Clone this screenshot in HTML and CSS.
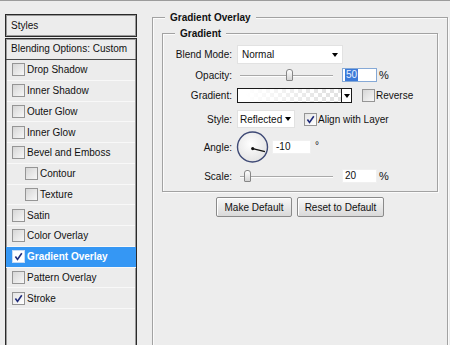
FILE: index.html
```html
<!DOCTYPE html>
<html lang="en">
<head>
    <meta charset="UTF-8">
    <title>Layer Style - Gradient Overlay</title>
    <link rel="stylesheet" href="styles.css">
</head>
<body>

<div class="dialog">
    <!-- style list on the left -->
    <div class="sidebar">
        <div class="styles-head">Styles</div>
        <div class="style-list">
            <div class="blend-row">Blending Options: Custom</div>
            <div class="item"><span class="check"></span>Drop Shadow</div>
            <div class="item"><span class="check"></span>Inner Shadow</div>
            <div class="item"><span class="check"></span>Outer Glow</div>
            <div class="item"><span class="check"></span>Inner Glow</div>
            <div class="item"><span class="check"></span>Bevel and Emboss</div>
            <div class="item sub"><span class="check"></span>Contour</div>
            <div class="item sub"><span class="check"></span>Texture</div>
            <div class="item"><span class="check"></span>Satin</div>
            <div class="item"><span class="check"></span>Color Overlay</div>
            <div class="item active"><span class="check on"><svg width="11" height="11" viewBox="0 0 11 11"><path d="M2.4 5.6 L4.5 8.4 L8.8 2.2" fill="none" stroke="#1f2b7a" stroke-width="1.6"/></svg></span>Gradient Overlay</div>
            <div class="item"><span class="check"></span>Pattern Overlay</div>
            <div class="item"><span class="check on"><svg width="11" height="11" viewBox="0 0 11 11"><path d="M2.4 5.6 L4.5 8.4 L8.8 2.2" fill="none" stroke="#1f2b7a" stroke-width="1.6"/></svg></span>Stroke</div>
        </div>
    </div>

    <!-- options on the right -->
    <div class="options">
        <div class="group outer">
            <div class="group-title">Gradient Overlay</div>
            <div class="group inner">
                <div class="group-title">Gradient</div>
                <div class="rows">
                    <div class="row r1">
                        <label class="lbl">Blend Mode:</label>
                        <div class="select blend">Normal<span class="arrow"></span></div>
                    </div>
                    <div class="row r2">
                        <label class="lbl">Opacity:</label>
                        <div class="slider"><span class="thumb" style="left: 46px"></span></div>
                        <div class="num focus"><span class="sel">50</span></div>
                        <span class="unit">%</span>
                    </div>
                    <div class="row r3">
                        <label class="lbl">Gradient:</label>
                        <div class="gradient-pick">
                            <div class="preview"></div>
                            <div class="drop"><span class="arrow"></span></div>
                        </div>
                        <span class="check reverse"></span><span class="cb-text">Reverse</span>
                    </div>
                    <div class="row r4">
                        <label class="lbl">Style:</label>
                        <div class="select style">Reflected<span class="arrow"></span></div>
                        <span class="check align on"><svg width="11" height="11" viewBox="0 0 11 11"><path d="M2.4 5.6 L4.5 8.4 L8.8 2.2" fill="none" stroke="#1f2b7a" stroke-width="1.6"/></svg></span><span class="cb-text">Align with Layer</span>
                    </div>
                    <div class="row r5">
                        <label class="lbl">Angle:</label>
                        <svg class="dial" width="35" height="32" viewBox="0 0 35 32">
                            <defs>
                                <radialGradient id="dialFill" cx="0.45" cy="0.4" r="0.6">
                                    <stop offset="0" stop-color="#ffffff"/>
                                    <stop offset="1" stop-color="#e4e4e4"/>
                                </radialGradient>
                            </defs>
                            <circle cx="17.5" cy="16" r="15" fill="url(#dialFill)" stroke="#3f4a76" stroke-width="1.4"/>
                            <line x1="17.7" y1="17.7" x2="30" y2="20.6" stroke="#111" stroke-width="1.3"/>
                            <circle cx="17.7" cy="17.6" r="1.6" fill="#111"/>
                        </svg>
                        <div class="num angle">-10</div>
                        <span class="deg">°</span>
                    </div>
                    <div class="row r6">
                        <label class="lbl">Scale:</label>
                        <div class="slider"><span class="thumb" style="left: 4px"></span></div>
                        <div class="num">20</div>
                        <span class="unit">%</span>
                    </div>
                </div>
            </div>
            <div class="buttons">
                <button class="btn make">Make Default</button>
                <button class="btn reset">Reset to Default</button>
            </div>
        </div>
    </div>
</div>

</body>
</html>
```

FILE: styles.css
```css
html, body {
    margin: 0;
    height: 345px;
    overflow: hidden;
}
body {
    font-family: "Liberation Sans", Arial, sans-serif;
    font-size: 10px;
    color: #111;
    background-color: #ededed;
    border-top: 1px solid #9c9c9c;
    box-sizing: border-box;
}
.dialog {
    display: flex;
    height: 100%;
    padding-left: 5px;
}

/* ---- left list ---- */
.sidebar {
    width: 132px;
    padding-top: 13px;
    display: flex;
    flex-direction: column;
}
.styles-head {
    height: 21px;
    line-height: 21px;
    padding-left: 5px;
    border: 1px solid #2a2a2a;
    box-shadow: inset 0 0 0 1px #9a9a9a;
    background-color: #ececec;
}
.style-list {
    flex: 1;
    margin-top: 1px;
    border: 1px solid #2a2a2a;
    border-bottom: none;
    box-shadow: inset 1px 0 0 #9a9a9a, inset -1px 0 0 #9a9a9a, inset 0 1px 0 #9a9a9a;
    background-color: #ececec;
}
.blend-row {
    height: 20px;
    line-height: 20px;
    padding-left: 5px;
    border-bottom: 1px solid #4a4a4a;
}
.item {
    display: flex;
    align-items: center;
    height: 19.75px;
    padding-left: 5px;
    border-bottom: 1px solid #f8f8f8;
    margin: 0 1px;
}
.item.sub {
    padding-left: 18px;
}
.item.active {
    background-color: #3597f4;
    color: #fff;
    font-weight: bold;
    margin: 0;
    padding-left: 6px;
}
.check {
    display: inline-flex;
    align-items: center;
    justify-content: center;
    box-sizing: border-box;
    width: 13px;
    height: 13px;
    margin-right: 2px;
    border: 1px solid #959595;
    background: linear-gradient(135deg, #d6d6d6, #f7f7f7);
    flex-shrink: 0;
}
.check.on {
    background: linear-gradient(135deg, #e4e4e4, #ffffff);
}
.item.active .check {
    border-color: #c8dcf5;
    background: #fff;
}

/* ---- right options ---- */
.options {
    margin-left: 15px;
    width: 296px;
    padding-top: 16px;
}
.group {
    border: 1px solid #a2a2a2;
    box-shadow: inset 1px 1px 0 #fbfbfb, 1px 1px 0 #fbfbfb;
}
.group.outer {
    height: 327px;
    padding: 0 9px;
    border-bottom: none;
}
.group.inner {
    margin-top: 9px;
}
.group-title {
    width: fit-content;
    margin: -7px 0 0 12px;
    padding: 0 5px;
    line-height: 13px;
    font-weight: bold;
    background-color: #ededed;
}
.outer > .group-title {
    margin-left: 3px;
}
.rows {
    padding-top: 5px;
}
.row {
    display: flex;
    align-items: center;
}
.r1 { height: 19px; }
.r2 { height: 22px; }
.r3 { height: 19px; }
.r4 { height: 28px; }
.r5 { height: 28px; }
.r6 { height: 30px; }
.lbl {
    width: 69px;
    margin-right: 5px;
    text-align: right;
    flex-shrink: 0;
}
.select {
    display: flex;
    align-items: center;
    justify-content: space-between;
    box-sizing: border-box;
    height: 19px;
    padding: 0 4px;
    background-color: #fff;
    border: 1px solid #e2e2e2;
}
.select.blend {
    width: 106px;
}
.select.style {
    width: 58px;
    height: 18px;
    padding: 0 3px 0 2px;
}
.arrow {
    width: 0;
    height: 0;
    border-left: 3.5px solid transparent;
    border-right: 3.5px solid transparent;
    border-top: 4px solid #000;
}
.slider {
    position: relative;
    width: 93px;
    height: 12px;
    margin-left: 3px;
    margin-right: 9px;
}
.slider::before {
    content: "";
    position: absolute;
    left: 0;
    right: 0;
    top: 6px;
    border-top: 1px solid #a9a9a9;
    border-bottom: 1px solid #fdfdfd;
}
.thumb {
    position: absolute;
    top: 0;
    box-sizing: border-box;
    width: 7px;
    height: 12px;
    border: 1px solid #868686;
    border-radius: 3px 3px 1px 1px;
    background: linear-gradient(#ffffff, #d4d4d4);
}
.num {
    box-sizing: border-box;
    width: 35px;
    height: 14px;
    line-height: 12px;
    padding-left: 2px;
    background-color: #fff;
    border: 1px solid #f0f0f0;
}
.num.focus {
    border-color: #86a9d6;
}
.sel {
    display: inline-block;
    background-color: #3c7ad8;
    color: #e8f0ff;
    padding: 0 1px;
}
.unit {
    margin-left: 2px;
    font-size: 11px;
}
.gradient-pick {
    display: flex;
    box-sizing: border-box;
    width: 115px;
    height: 15px;
    border: 1px solid #1a1a1a;
}
.preview {
    flex: 1;
    border-right: 1px solid #1a1a1a;
    background:
        linear-gradient(to right, #fff 8%, rgba(255, 255, 255, 0) 85%),
        conic-gradient(#e3e3e3 25%, #fff 0 50%, #e3e3e3 0 75%, #fff 0) 0 0 / 8px 8px;
}
.drop {
    width: 9px;
    display: flex;
    align-items: center;
    justify-content: center;
    background-color: #fff;
}
.check.reverse {
    margin-left: 10px;
    margin-right: 1px;
}
.check.align {
    margin-left: 9px;
    margin-right: 1px;
}
.dial {
    margin-left: -2px;
    margin-right: 2px;
}
.num.angle {
    width: 39px;
    padding-left: 3px;
}
.deg {
    align-self: flex-start;
    margin-top: 7px;
    margin-left: 4px;
}
.buttons {
    display: flex;
    justify-content: center;
    gap: 5px;
    margin-top: 5px;
}
.btn {
    height: 20px;
    padding: 0;
    font-family: "Liberation Sans", Arial, sans-serif;
    font-size: 10px;
    color: #111;
    border: 1px solid #8a8a8a;
    border-radius: 2px;
    background: linear-gradient(#f8f8f8, #d9d9d9);
    box-shadow: 1px 1px 0 #fff inset;
}
.btn.make {
    width: 76px;
}
.btn.reset {
    width: 87px;
}
```
